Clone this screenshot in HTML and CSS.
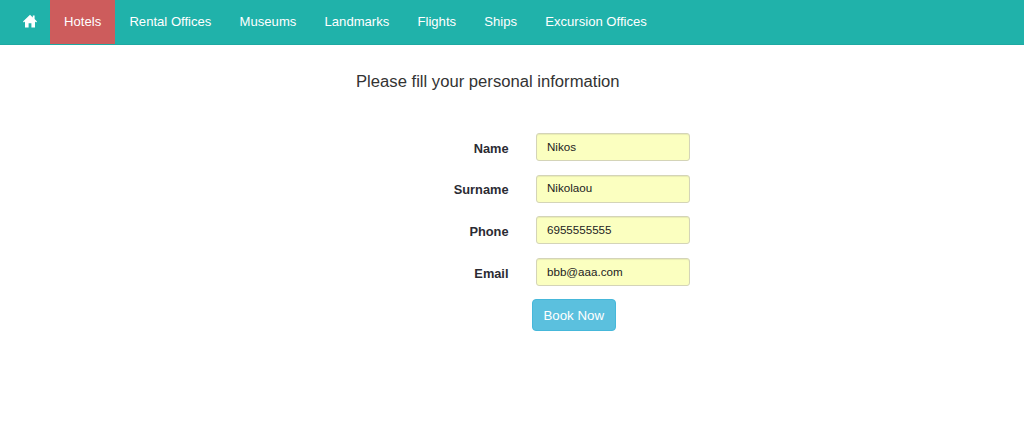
FILE: index.html
```html
<!DOCTYPE html>
<html lang="en">
<head>
    <meta charset="UTF-8">
    <title>Booking</title>
    <link rel="stylesheet" href="styles.css">
</head>
<body>
    <nav class="navbar">
        <a class="nav-link nav-home" href="#">
            <svg class="home-icon" width="14" height="14" viewBox="0 0 14 14"><path d="M7 .8 0 7.4l.9 1L2 7.4V13.4h3.6V9.2h2.8v4.2H12V7.4l1.100 1 .9-1L11.600 5.100V1.500H9.800v1.900z" fill="#fff"/></svg>
        </a>
        <a class="nav-link active" href="#">Hotels</a>
        <a class="nav-link" href="#">Rental Offices</a>
        <a class="nav-link" href="#">Museums</a>
        <a class="nav-link" href="#">Landmarks</a>
        <a class="nav-link" href="#">Flights</a>
        <a class="nav-link" href="#">Ships</a>
        <a class="nav-link" href="#">Excursion Offices</a>
    </nav>

    <h4 class="form-title">Please fill your personal information</h4>

    <form class="booking-form">
        <div class="form-row">
            <label class="form-label">Name</label>
            <input class="form-input" type="text" value="Nikos">
        </div>
        <div class="form-row">
            <label class="form-label">Surname</label>
            <input class="form-input" type="text" value="Nikolaou">
        </div>
        <div class="form-row">
            <label class="form-label">Phone</label>
            <input class="form-input" type="text" value="6955555555">
        </div>
        <div class="form-row">
            <label class="form-label">Email</label>
            <input class="form-input" type="text" value="bbb@aaa.com">
        </div>
        <div class="form-actions">
            <button class="btn-book" type="button">Book Now</button>
        </div>
    </form>
</body>
</html>
```

FILE: styles.css
```css
* {
    box-sizing: border-box;
}

html, body {
    height: 100%;
}

body {
    margin: 0;
    background: #fff;
    color: #333;
    font-family: "Liberation Sans", Arial, sans-serif;
    font-size: 14px;
    overflow: hidden;
}

.navbar {
    display: flex;
    height: 45px;
    padding-left: 9px;
    background: #20b2aa;
    border-bottom: 1px solid #1ea9a2;
}

.nav-link {
    display: flex;
    align-items: center;
    padding: 0 14.100px 2px;
    color: #fff;
    font-size: 13.100px;
    text-decoration: none;
}

.nav-home {
    padding: 0 13px 2px 14px;
}

.home-icon {
    display: block;
}

.active {
    background: #cd5c5c;
}

.form-title {
    margin: 27px 0 0 356px;
    font-size: 16.650px;
    font-weight: 400;
    line-height: 20px;
}

.booking-form {
    display: flex;
    flex-direction: column;
    margin-top: 41px;
}

.form-row {
    display: flex;
    align-items: center;
    height: 28px;
    margin-bottom: 13.700px;
}

.form-label {
    width: 508.500px;
    padding-top: 2px;
    color: #2b2b33;
    text-align: right;
    font-size: 12.800px;
    font-weight: 700;
}

.form-input {
    width: 154px;
    height: 28px;
    margin-left: 27.500px;
    padding: 0 10px 2px;
    background: #fbffc0;
    border: 1px solid #d4d4b8;
    border-radius: 3px;
    box-shadow: inset 0 1px 1px rgba(0, 0, 0, .075);
    color: #222;
    font-family: "Liberation Sans", Arial, sans-serif;
    font-size: 11.600px;
}

.form-actions {
    display: flex;
    margin: -0.900px 0 0 532px;
}

.btn-book {
    width: 83.500px;
    height: 32px;
    padding: 1px 0 0;
    background: #5bc0de;
    border: 1px solid #46b8da;
    border-radius: 4px;
    color: #fff;
    font-family: "Liberation Sans", Arial, sans-serif;
    font-size: 13.300px;
}
```
